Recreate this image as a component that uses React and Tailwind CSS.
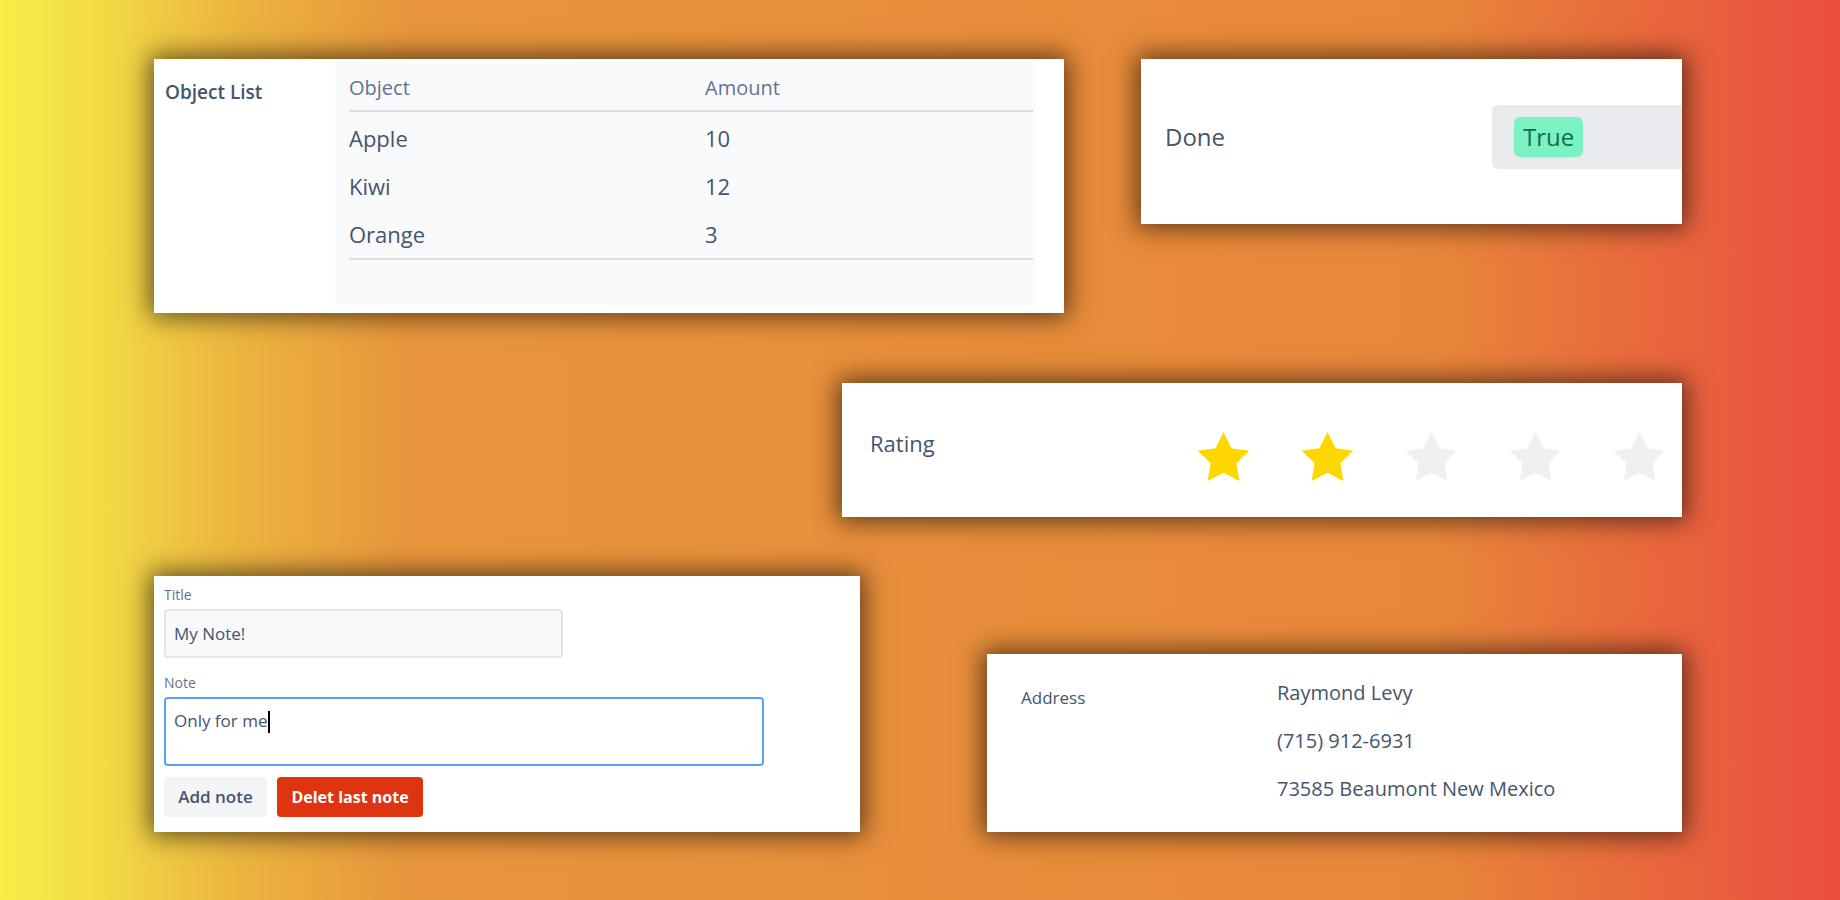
import React from 'react';

// shared card look: plain white block with a heavy dark glow
const card = 'bg-white shadow-[0_0_24px_4px_rgba(0,0,0,0.6)]';

const fruits = [
  { name: 'Apple', amount: 10 },
  { name: 'Kiwi', amount: 12 },
  { name: 'Orange', amount: 3 },
];

const rating = 2;

const Star = ({ filled }) => (
  <svg viewBox="2 2 20 19.02" className="w-[53px] h-[49px]">
    <polygon
      points="12,2 15.09,8.26 22,9.27 17,14.14 18.18,21.02 12,17.77 5.82,21.02 7,14.14 2,9.27 8.91,8.26"
      fill={filled ? '#ffd700' : '#f0f0f0'}
    />
  </svg>
);

const App = () => {
  return (
    <div className="h-[900px] w-full overflow-hidden bg-[linear-gradient(to_right,#f8ee47_0%,#f2d845_6%,#ecb43f_13%,#e8963b_22%,#e88e3b_50%,#e8873a_78%,#e96c3c_88%,#ea4e40_100%)] pl-[154px] pr-[158px] pt-[59px] font-['Open_Sans',sans-serif] text-slate-600">
      {/* top row */}
      <div className="flex items-start justify-between">
        <div className={`${card} flex w-[910px] h-[254px]`}>
          <div className="w-[181px] shrink-0 pl-[11px] pt-[20px] text-[19px] leading-[26px] font-semibold">
            Object List
          </div>
          <div className="mt-[3px] mb-[7px] w-[701px] rounded-md bg-[#f9fafb] pl-[14px] pr-[3px]">
            <div className="grid grid-cols-[356px_1fr] items-center h-[50px] pt-[4px] border-b-2 border-[#dadfe7] text-[20px] text-slate-500">
              <span>Object</span>
              <span>Amount</span>
            </div>
            <div className="pt-[2px] border-b-2 border-[#dadfe7]">
              {fruits.map((f) => (
                <div key={f.name} className="grid grid-cols-[356px_1fr] items-center h-[48px] text-[22px]">
                  <span>{f.name}</span>
                  <span>{f.amount}</span>
                </div>
              ))}
            </div>
          </div>
        </div>

        <div className={`${card} flex items-center w-[541px] h-[165px] pb-[10px] overflow-hidden`}>
          <div className="w-[351px] shrink-0 pl-[24px] text-[24px] font-medium">Done</div>
          <div className="flex-1 h-[64px] flex items-center pl-[22px] rounded-l-md bg-[#e9eaee]">
            <span className="h-[40px] px-[9px] rounded-md bg-[#7af2c1] text-[#146c4a] text-[24px] leading-[40px]">
              True
            </span>
          </div>
        </div>
      </div>

      {/* rating row */}
      <div className="flex justify-end mt-[70px]">
        <div className={`${card} flex items-start w-[840px] h-[134px]`}>
          <div className="w-[355px] shrink-0 pl-[28px] pt-[46px] text-[22px] leading-[28px] font-medium">
            Rating
          </div>
          <div className="flex gap-[51px] pt-[49px]">
            {[1, 2, 3, 4, 5].map((n) => (
              <Star key={n} filled={n <= rating} />
            ))}
          </div>
        </div>
      </div>

      {/* bottom row */}
      <div className="flex items-start justify-between mt-[59px]">
        <div className={`${card} w-[706px] h-[256px] px-[10px] pt-[9px]`}>
          <div className="text-[14px] leading-[20px] text-slate-500">Title</div>
          <input
            readOnly
            defaultValue="My Note!"
            className="block mt-[4px] w-[399px] h-[49px] border-2 border-[#e2e5ea] bg-[#f8f9fb] rounded-sm px-[8px] text-[17px] text-slate-600 outline-none"
          />
          <div className="mt-[15px] text-[14px] leading-[20px] text-slate-500">Note</div>
          <div className="mt-[4px] w-[600px] h-[69px] border-2 border-[#5aa0f8] rounded-sm px-[8px] pt-[10px] text-[17px] leading-[24px]">
            Only for me
            <span className="inline-block w-[2px] h-[22px] bg-black align-middle ml-[1px]" />
          </div>
          <div className="flex gap-[10px] mt-[11px]">
            <button className="w-[103px] h-[40px] rounded-sm bg-[#f3f4f6] text-[17px] font-semibold text-slate-600">
              Add note
            </button>
            <button className="w-[146px] h-[40px] rounded-sm bg-[#de3510] text-[16px] font-bold text-white">
              Delet last note
            </button>
          </div>
        </div>

        <div className={`${card} flex w-[695px] h-[178px] mt-[78px]`}>
          <div className="w-[290px] shrink-0 pl-[34px] pt-[32px] text-[17px] leading-[24px] font-medium">
            Address
          </div>
          <div className="flex flex-col pt-[15px] text-[20px] leading-[48px]">
            <span>Raymond Levy</span>
            <span>(715) 912-6931</span>
            <span>73585 Beaumont New Mexico</span>
          </div>
        </div>
      </div>
    </div>
  );
};

export default App;
